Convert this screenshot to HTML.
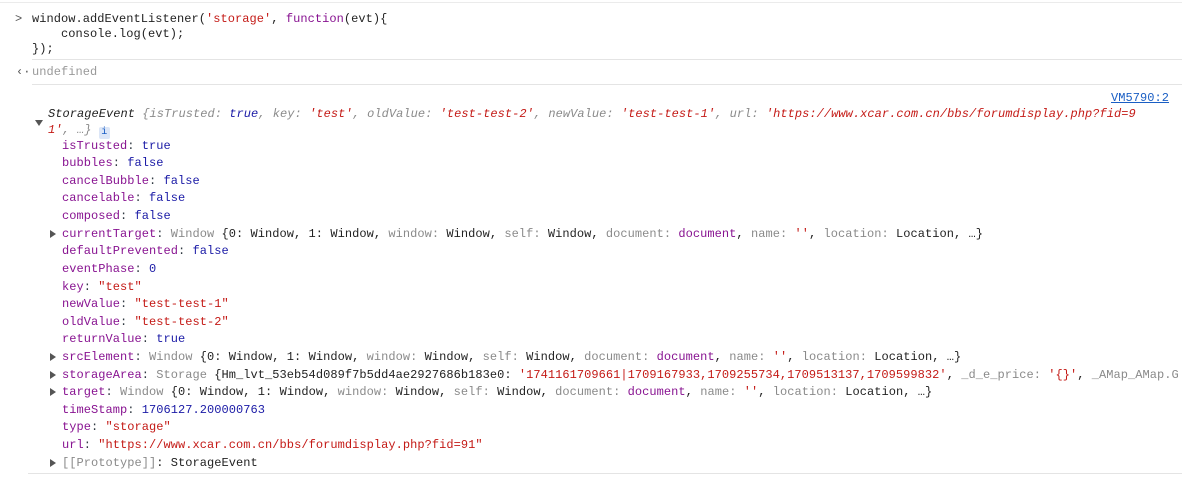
<!DOCTYPE html>
<html><head><meta charset="utf-8"><style>
body{margin:0;width:1182px;height:477px;background:#fff;overflow:hidden;position:relative;font-family:"Liberation Mono",monospace;font-size:12px;letter-spacing:0.05px;color:#303942}
.l{position:absolute;white-space:pre;line-height:16px;height:16px}
.k{color:#881391}.b{color:#1a1aa6}.s{color:#c41a16}.g{color:#8a8a8a}.d{color:#222}.i{font-style:italic}
.sep{position:absolute;height:1px;background:#e4e4e4;right:0}
.tri{position:absolute;width:0;height:0;border-top:4px solid transparent;border-bottom:4px solid transparent;border-left:6px solid #555}
.down{position:absolute;width:0;height:0;border-left:4px solid transparent;border-right:4px solid transparent;border-top:6px solid #555}
</style></head><body>
<div class="sep" style="left:0;top:2px;background:#ebebeb"></div>
<div class="l g" style="left:15px;top:11px;color:#555">&gt;</div>
<div class="l" style="left:32px;top:11px"><span class="d">window.addEventListener(</span><span class="s">'storage'</span><span class="d">, </span><span class="k">function</span><span class="d">(evt){</span></div>
<div class="l d" style="left:32px;top:26px">    console.log(evt);</div>
<div class="l d" style="left:32px;top:41px">});</div>
<div class="sep" style="left:32px;top:59px"></div>
<div class="l" style="left:16px;top:64px;color:#555">&#8249;&#183;</div>
<div class="l g" style="left:32px;top:64px;color:#999">undefined</div>
<div class="sep" style="left:32px;top:84px"></div>
<div class="l" style="left:1111px;top:90px;color:#1a5ec4;text-decoration:underline">VM5790:2</div>
<div class="down" style="left:35px;top:120px"></div>
<div class="l i" style="left:48px;top:106px"><span class="d">StorageEvent </span><span class="g">{isTrusted: </span><span class="b">true</span><span class="g">, key: </span><span class="s">'test'</span><span class="g">, oldValue: </span><span class="s">'test-test-2'</span><span class="g">, newValue: </span><span class="s">'test-test-1'</span><span class="g">, url: </span><span class="s">'https://www.xcar.com.cn/bbs/forumdisplay.php?fid=9</span></div>
<div class="l i" style="left:48px;top:122px"><span class="s">1'</span><span class="g">, …}</span> <span style="display:inline-block;width:11px;height:12px;background:#dce6f7;color:#1a5ec4;text-align:center;font-size:10px;line-height:12px;vertical-align:-1px;font-style:normal;border-radius:2px">i</span></div>
<div class="l" style="left:62px;top:138px"><span class="k">isTrusted</span>: <span class="b">true</span></div>
<div class="l" style="left:62px;top:155px"><span class="k">bubbles</span>: <span class="b">false</span></div>
<div class="l" style="left:62px;top:173px"><span class="k">cancelBubble</span>: <span class="b">false</span></div>
<div class="l" style="left:62px;top:190px"><span class="k">cancelable</span>: <span class="b">false</span></div>
<div class="l" style="left:62px;top:208px"><span class="k">composed</span>: <span class="b">false</span></div>
<div class="tri" style="left:50px;top:230px"></div>
<div class="l" style="left:62px;top:226px"><span class="k">currentTarget</span>: <span class="g">Window </span><span class="d">{0: Window, 1: Window, </span><span class="g">window: </span><span class="d">Window, </span><span class="g">self: </span><span class="d">Window, </span><span class="g">document: </span><span class="k">document</span><span class="d">, </span><span class="g">name: </span><span class="s">''</span><span class="d">, </span><span class="g">location: </span><span class="d">Location, …}</span></div>
<div class="l" style="left:62px;top:243px"><span class="k">defaultPrevented</span>: <span class="b">false</span></div>
<div class="l" style="left:62px;top:261px"><span class="k">eventPhase</span>: <span class="b">0</span></div>
<div class="l" style="left:62px;top:279px"><span class="k">key</span>: <span class="s">"test"</span></div>
<div class="l" style="left:62px;top:296px"><span class="k">newValue</span>: <span class="s">"test-test-1"</span></div>
<div class="l" style="left:62px;top:314px"><span class="k">oldValue</span>: <span class="s">"test-test-2"</span></div>
<div class="l" style="left:62px;top:331px"><span class="k">returnValue</span>: <span class="b">true</span></div>
<div class="tri" style="left:50px;top:353px"></div>
<div class="l" style="left:62px;top:349px"><span class="k">srcElement</span>: <span class="g">Window </span><span class="d">{0: Window, 1: Window, </span><span class="g">window: </span><span class="d">Window, </span><span class="g">self: </span><span class="d">Window, </span><span class="g">document: </span><span class="k">document</span><span class="d">, </span><span class="g">name: </span><span class="s">''</span><span class="d">, </span><span class="g">location: </span><span class="d">Location, …}</span></div>
<div class="tri" style="left:50px;top:371px"></div>
<div class="l" style="left:62px;top:367px"><span class="k">storageArea</span>: <span class="g">Storage </span><span class="d">{Hm_lvt_53eb54d089f7b5dd4ae2927686b183e0: </span><span class="s">'1741161709661|1709167933,1709255734,1709513137,1709599832'</span><span class="d">, </span><span class="g">_d_e_price: </span><span class="s">'{}'</span><span class="d">, </span><span class="g">_AMap_AMap.G</span></div>
<div class="tri" style="left:50px;top:388px"></div>
<div class="l" style="left:62px;top:384px"><span class="k">target</span>: <span class="g">Window </span><span class="d">{0: Window, 1: Window, </span><span class="g">window: </span><span class="d">Window, </span><span class="g">self: </span><span class="d">Window, </span><span class="g">document: </span><span class="k">document</span><span class="d">, </span><span class="g">name: </span><span class="s">''</span><span class="d">, </span><span class="g">location: </span><span class="d">Location, …}</span></div>
<div class="l" style="left:62px;top:402px"><span class="k">timeStamp</span>: <span class="b">1706127.200000763</span></div>
<div class="l" style="left:62px;top:419px"><span class="k">type</span>: <span class="s">"storage"</span></div>
<div class="l" style="left:62px;top:437px"><span class="k">url</span>: <span class="s">"https://www.xcar.com.cn/bbs/forumdisplay.php?fid=91"</span></div>
<div class="tri" style="left:50px;top:459px"></div>
<div class="l" style="left:62px;top:455px"><span class="g">[[Prototype]]</span><span class="d">: StorageEvent</span></div>
<div class="sep" style="left:28px;top:473px"></div>
</body></html>
